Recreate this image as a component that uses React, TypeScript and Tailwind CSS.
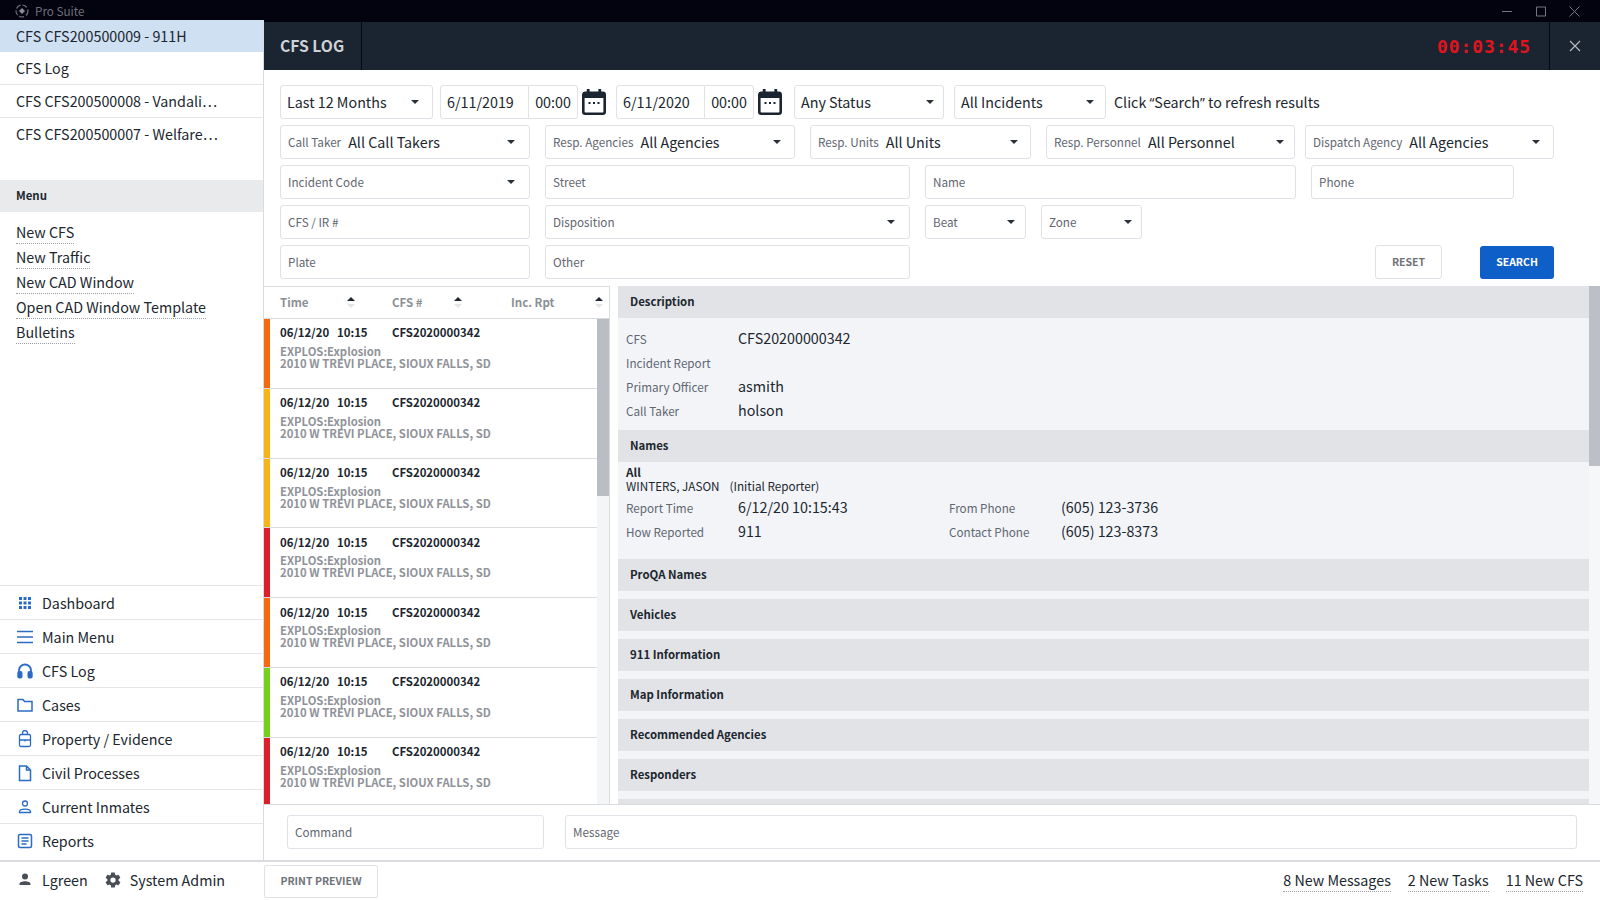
const font = { fontFamily: '"Noto Sans CJK SC", "Noto Sans", sans-serif' };

const colors = ["bg-[#f46a12]", "bg-[#f6b417]", "bg-[#f6b417]", "bg-[#dc1f2b]", "bg-[#f46a12]", "bg-[#74d01c]", "bg-[#dc1f2b]"];
const sections = ["ProQA Names", "Vehicles", "911 Information", "Map Information", "Recommended Agencies", "Responders"];

const Caret = () => (
	<svg width="8" height="4" viewBox="0 0 8 4" className="shrink-0">
		<path d="M0 0h8L4 4z" fill="#2a3038" />
	</svg>
);

const Sel = ({ label, value, className, caret }: { label?: string; value?: string; className: string; caret?: string }) => (
	<div className={`flex h-[34px] shrink-0 items-center rounded-[3px] border border-[#dfe2e6] bg-white pr-[14px] ${label ? "pl-[7px]" : "pl-[6px]"} ${className}`}>
		{label && <span className={`whitespace-nowrap text-[11.7px] text-[#5f6670] ${value ? "mr-[7px]" : ""}`}>{label}</span>}
		{value && <span className="whitespace-nowrap text-[14.3px] text-[#20262e]">{value}</span>}
		<span className={`ml-auto ${caret ?? ""}`}>
			<Caret />
		</span>
	</div>
);

const Field = ({ label, className }: { label: string; className: string }) => (
	<div className={`flex h-[34px] shrink-0 items-center rounded-[3px] border border-[#dfe2e6] bg-white px-[7px] text-[11.7px] text-[#5f6670] ${className}`}>{label}</div>
);

const DateTime = ({ date, className }: { date: string; className?: string }) => (
	<div className={`flex shrink-0 items-center ${className ?? ""}`}>
		<div className="flex h-[34px] w-[89px] items-center rounded-l-[3px] border border-[#dfe2e6] pl-[6px] text-[14.3px] text-[#20262e]">{date}</div>
		<div className="flex h-[34px] w-[49px] items-center justify-center rounded-r-[3px] border border-l-0 border-[#dfe2e6] text-[14.3px] text-[#20262e]">00:00</div>
		<svg width="24" height="26" viewBox="0 0 24 26" className="ml-[4px] shrink-0">
			<rect x="1.3" y="3.800" width="21.400" height="20.900" rx="2" fill="none" stroke="#1b2531" strokeWidth="2.600" />
			<rect x="1" y="3" width="22" height="6" fill="#1b2531" />
			<rect x="4.800" y="0" width="2.800" height="5" fill="#1b2531" />
			<rect x="16.400" y="0" width="2.800" height="5" fill="#1b2531" />
			<rect x="6.500" y="13" width="2" height="2" fill="#1b2531" />
			<rect x="11" y="13" width="2" height="2" fill="#1b2531" />
			<rect x="15.500" y="13" width="2" height="2" fill="#1b2531" />
		</svg>
	</div>
);

const Sort = () => (
	<svg width="8" height="11" viewBox="0 0 8 11" className="shrink-0">
		<path d="M0 4l4-4 4 4z" fill="#20262e" />
		<path d="M0 7l4 4 4-4z" fill="#e3e5e8" />
	</svg>
);

const iconProps = { fill: "none", stroke: "#2a6cc4", strokeWidth: 1.5, width: 18, height: 18, viewBox: "0 0 18 18" };

const navItems = [
	{
		label: "Dashboard",
		icon: (
			<svg width="18" height="18" viewBox="0 0 18 18" fill="#2a6cc4">
				{[3, 7.5, 12].flatMap((x) => [3, 7.5, 12].map((y) => <rect key={`${x}-${y}`} x={x} y={y} width="3" height="3" />))}
			</svg>
		),
	},
	{
		label: "Main Menu",
		icon: (
			<svg {...iconProps}>
				<path d="M1 3.500h16M1 9h16M1 14.500h16" />
			</svg>
		),
	},
	{
		label: "CFS Log",
		icon: (
			<svg {...iconProps} strokeWidth={1.8}>
				<path d="M3 11V8.500a6 6 0 0 1 12 0V11" />
				<rect x="2.200" y="10" width="3.400" height="5.500" rx="1" fill="#2a6cc4" />
				<rect x="12.400" y="10" width="3.400" height="5.500" rx="1" fill="#2a6cc4" />
			</svg>
		),
	},
	{
		label: "Cases",
		icon: (
			<svg {...iconProps}>
				<path d="M2 3.500h5l1.500 2h7.500v9.500h-14z" />
			</svg>
		),
	},
	{
		label: "Property / Evidence",
		icon: (
			<svg {...iconProps} strokeWidth={1.3}>
				<rect x="3.500" y="4.500" width="11" height="12" rx="1.500" />
				<path d="M6.500 4.500V3a2.500 2.500 0 0 1 5 0v1.500M3.500 10h11M9 9.500v2" />
			</svg>
		),
	},
	{
		label: "Civil Processes",
		icon: (
			<svg {...iconProps}>
				<path d="M3.500 2h7l4 4v10.500h-11zM10.500 2v4h4" />
			</svg>
		),
	},
	{
		label: "Current Inmates",
		icon: (
			<svg {...iconProps} strokeWidth={1.3}>
				<circle cx="9" cy="5.500" r="2.500" />
				<path d="M3.500 14.500v-1c0-1.500 2.500-2.300 5.500-2.300s5.500.8 5.500 2.300v1z" />
			</svg>
		),
	},
	{
		label: "Reports",
		icon: (
			<svg {...iconProps}>
				<rect x="2.500" y="2.500" width="13" height="13" rx="1.500" />
				<path d="M5.500 6h7M5.500 9h7M5.500 12h5" />
			</svg>
		),
	},
];

const Section = ({ title }: { title: string }) => (
	<div className="flex h-[32px] shrink-0 items-center bg-[#e1e3e7] px-[12px] text-[11.4px] font-semibold text-[#20262e]">{title}</div>
);

const Info = ({ label, value }: { label: string; value?: string }) => (
	<div className="flex h-[24px] items-center">
		<span className="w-[112px] text-[11.7px] text-[#5f6670]">{label}</span>
		<span className="pb-[2px] text-[14.3px] text-[#20262e]">{value}</span>
	</div>
);

const NewCount = ({ text }: { text: string }) => (
	<span className="border-b border-dotted border-[#9aa0a8] pb-[3px] text-[14.3px] leading-[17px] text-[#20262e]">{text}</span>
);

export default function App() {
	return (
		<div className="flex h-[900px] w-[1600px] flex-col overflow-hidden bg-white" style={font}>
			<div className="flex h-[22px] shrink-0 items-center bg-[#02030f] pl-[15px]">
				<svg width="14" height="14" viewBox="0 0 14 14" fill="none" className="mr-[6px]">
					<circle cx="7" cy="7" r="6" stroke="#6d7079" strokeWidth="1.200" strokeDasharray="5 2" />
					<path d="M7 4l3 3-3 3-3-3z" fill="#8a8d95" />
				</svg>
				<span className="text-[11.700px] leading-none text-[#6d7079]">Pro Suite</span>
				<svg width="100" height="22" viewBox="0 0 100 22" fill="none" stroke="#73777f" strokeWidth="1" className="ml-auto">
					<path d="M2 11.500h10M36.500 7h9v9h-9zM69.500 6.500l10 10M79.500 6.500l-10 10" />
				</svg>
			</div>

			<div className="flex min-h-0 flex-1">
				<aside className="-mt-[2px] flex w-[264px] shrink-0 flex-col border-r border-[#d9dbdf] bg-white text-[14.3px] text-[#20262e]">
					<div className="flex h-[32px] items-center bg-[#cfe0f3] pl-[16px]">CFS CFS200500009 - 911H</div>
					<div className="flex h-[33px] items-center border-b border-[#e3e5e8] pl-[16px]">CFS Log</div>
					<div className="flex h-[33px] items-center border-b border-[#e3e5e8] pl-[16px]">CFS CFS200500008 - Vandali…</div>
					<div className="flex h-[33px] items-center pb-[2px] pl-[16px]">CFS CFS200500007 - Welfare…</div>
					<div className="mt-[29px] flex h-[32px] items-center bg-[#e9eaec] pl-[16px] text-[11.400px] font-semibold">Menu</div>
					<div className="mt-[11px] flex flex-col items-start gap-[4px] pl-[16px] leading-[18px]">
						{["New CFS", "New Traffic", "New CAD Window", "Open CAD Window Template", "Bulletins"].map((m) => (
							<span key={m} className="border-b border-dotted border-[#9aa0a8] pb-[2px]">
								{m}
							</span>
						))}
					</div>
					<div className="mb-[3px] mt-auto flex flex-col">
						{navItems.map((n) => (
							<div key={n.label} className="flex h-[34px] items-center border-t border-[#e3e5e8] pl-[16px]">
								<span className="mr-[8px] flex w-[18px] justify-center">{n.icon}</span>
								{n.label}
							</div>
						))}
					</div>
				</aside>

				<main className="flex min-w-0 flex-1 flex-col">
					<div className="flex h-[48px] shrink-0 items-stretch bg-[#1a2531]">
						<div className="flex w-[98px] items-center border-r border-[#05080e] pl-[16px] text-[15.700px] font-semibold text-[#cfd3d8]">CFS LOG</div>
						<div className="ml-auto flex items-center pr-[18px] text-[18px] font-bold tracking-[0.9px] text-[#e0141f]" style={{ fontFamily: '"DejaVu Sans Mono", monospace' }}>
							00:03:45
						</div>
						<div className="flex w-[51px] items-center justify-center border-l border-[#05080e]">
							<svg width="12" height="12" viewBox="0 0 12 12" stroke="#b6bac0" strokeWidth="1.200">
								<path d="M1 1l10 10M11 1L1 11" />
							</svg>
						</div>
					</div>

					<div className="flex shrink-0 flex-col gap-[6px] pl-[16px] pr-[46px] pt-[15px]">
						<div className="flex h-[34px] items-center">
							<Sel value="Last 12 Months" className="mr-[7px] w-[153px]" caret="mr-[-1px]" />
							<DateTime date="6/11/2019" className="mr-[10px]" />
							<DateTime date="6/11/2020" className="mr-[12px]" />
							<Sel value="Any Status" className="mr-[10px] w-[150px]" caret="mr-[-5px]" />
							<Sel value="All Incidents" className="mr-[8px] w-[152px]" caret="mr-[-3px]" />
							<span className="text-[14.3px] text-[#20262e]">
								Click <span className="font-['Noto_Sans'] text-[13.5px]">“</span>Search<span className="font-['Noto_Sans'] text-[13.5px]">”</span> to refresh results
							</span>
						</div>
						<div className="flex items-center">
							<Sel label="Call Taker" value="All Call Takers" className="mr-[15px] w-[250px]" />
							<Sel label="Resp. Agencies" value="All Agencies" className="mr-[15px] w-[250px]" caret="mr-[-1px]" />
							<Sel label="Resp. Units" value="All Units" className="mr-[15px] w-[221px]" caret="mr-[-2px]" />
							<Sel label="Resp. Personnel" value="All Personnel" className="mr-[10px] w-[249px]" caret="mr-[-4px]" />
							<Sel label="Dispatch Agency" value="All Agencies" className="w-[249px]" caret="mr-[-1px]" />
						</div>
						<div className="flex items-center">
							<Sel label="Incident Code" className="mr-[15px] w-[250px]" />
							<Field label="Street" className="mr-[15px] w-[365px]" />
							<Field label="Name" className="mr-[15px] w-[371px]" />
							<Field label="Phone" className="w-[203px]" />
						</div>
						<div className="flex items-center">
							<Field label="CFS / IR #" className="mr-[15px] w-[250px]" />
							<Sel label="Disposition" className="mr-[15px] w-[365px]" />
							<Sel label="Beat" className="mr-[15px] w-[101px]" caret="mr-[-4px]" />
							<Sel label="Zone" className="w-[101px]" caret="mr-[-5px]" />
						</div>
						<div className="flex items-center">
							<Field label="Plate" className="mr-[15px] w-[250px]" />
							<Field label="Other" className="w-[365px]" />
							<div className="ml-auto mr-[38px] flex h-[34px] w-[67px] items-center justify-center rounded-[3px] border border-[#dfe2e6] text-[10.500px] font-semibold text-[#6f7379]">RESET</div>
							<div className="flex h-[33px] w-[74px] items-center justify-center rounded-[3px] bg-[#0f5fc8] text-[10.500px] font-semibold text-white">SEARCH</div>
						</div>
					</div>

					<div className="mt-[7px] flex min-h-0 flex-1">
						<div className="flex w-[346px] shrink-0 flex-col border-t border-r border-[#d9dbdf]">
							<div className="flex h-[32px] shrink-0 items-center border-b border-[#d9dbdf] pl-[16px] text-[11.500px] font-semibold text-[#8a8f96]">
								<span className="w-[67px]">Time</span>
								<span className="w-[45px]">
									<Sort />
								</span>
								<span className="w-[62px]">CFS #</span>
								<span className="w-[57px]">
									<Sort />
								</span>
								<span className="w-[84px]">Inc. Rpt</span>
								<Sort />
							</div>
							<div className="flex min-h-0 flex-1 overflow-hidden">
								<div className="min-w-0 flex-1">
									{colors.map((c, i) => (
										<div key={i} className="flex h-[69.800px] border-b border-[#d9dbdf]">
											<span className={`w-[6px] shrink-0 ${c}`} />
											<div className="pl-[10px] pt-[4px]">
												<div className="flex h-[20px] items-center text-[11.400px] font-semibold text-[#20262e]">
													<span className="w-[57px]">06/12/20</span>
													<span className="w-[55px]">10:15</span>
													<span>CFS2020000342</span>
												</div>
												<div className="mt-[2px] text-[11.300px] font-semibold leading-[12px] text-[#8f9399]">EXPLOS:Explosion</div>
												<div className="text-[11.300px] font-semibold leading-[12px] text-[#8f9399]">2010 W TREVI PLACE, SIOUX FALLS, SD</div>
											</div>
										</div>
									))}
								</div>
								<div className="w-[12px] shrink-0 bg-[#f4f5f7]">
									<div className="h-[177px] bg-[#b9bdc4]" />
								</div>
							</div>
						</div>

						<div className="flex min-w-0 flex-1 overflow-hidden pl-[8px]">
							<div className="min-w-0 flex-1 overflow-hidden bg-[#f2f4f8]">
								<Section title="Description" />
								<div className="h-[112px] px-[8px] pt-[9px]">
									<Info label="CFS" value="CFS20200000342" />
									<Info label="Incident Report" />
									<Info label="Primary Officer" value="asmith" />
									<Info label="Call Taker" value="holson" />
								</div>
								<Section title="Names" />
								<div className="h-[97px] px-[8px] pt-[3px]">
									<div className="text-[11.700px] font-semibold leading-[13px] text-[#20262e]">All</div>
									<div className="mb-[2px] text-[11.700px] leading-[16px] text-[#20262e]">
										WINTERS, JASON<span className="ml-[10px]">(Initial Reporter)</span>
									</div>
									<div className="flex">
										<div className="w-[323px]">
											<Info label="Report Time" value="6/12/20 10:15:43" />
											<Info label="How Reported" value="911" />
										</div>
										<div>
											<Info label="From Phone" value="(605) 123-3736" />
											<Info label="Contact Phone" value="(605) 123-8373" />
										</div>
									</div>
								</div>
								<div className="flex flex-col gap-[8px]">
									{sections.map((s) => (
										<Section key={s} title={s} />
									))}
									<Section title="" />
								</div>
							</div>
							<div className="w-[11px] shrink-0 bg-[#f6f7f9]">
								<div className="h-[180px] bg-[#bcbfc6]" />
							</div>
						</div>
					</div>

					<div className="flex h-[56px] shrink-0 items-center gap-[21px] border-t border-[#d9dbdf] pb-[2px] pl-[23px] pr-[23px]">
						<Field label="Command" className="w-[257px]" />
						<Field label="Message" className="flex-1" />
					</div>
				</main>
			</div>

			<div className="flex h-[40px] shrink-0 items-center border-t-2 border-[#d9dbdf] bg-white">
				<div className="flex w-[264px] shrink-0 items-center pb-[2px] pl-[16px] text-[14.3px] text-[#20262e]">
					<svg width="18" height="18" viewBox="0 0 18 18" fill="#4a4f57" className="mr-[8px]">
						<circle cx="9" cy="5.500" r="3" />
						<path d="M3.500 14v-1c0-1.800 2.800-2.800 5.500-2.800s5.500 1 5.500 2.800v1z" />
					</svg>
					<span>Lgreen</span>
					<svg width="18" height="18" viewBox="0 0 24 24" fill="#4a4f57" className="ml-[16px] mr-[8px]">
						<path d="M19.400 13c.04-.33.06-.66.06-1s-.02-.67-.06-1l2.110-1.650a.5.5 0 0 0 .12-.64l-2-3.460a.5.5 0 0 0-.61-.22l-2.490 1a7.300 7.300 0 0 0-1.730-1l-.38-2.650A.49.49 0 0 0 14 2h-4a.49.49 0 0 0-.49.420l-.38 2.650a7.700 7.700 0 0 0-1.730 1l-2.490-1a.49.49 0 0 0-.61.220l-2 3.460a.49.49 0 0 0 .12.640L4.530 11a7.900 7.900 0 0 0 0 2l-2.110 1.650a.5.5 0 0 0-.12.640l2 3.460c.12.220.39.300.61.220l2.490-1c.52.400 1.080.730 1.730 1l.38 2.650c.03.240.24.420.49.420h4c.25 0 .46-.18.490-.42l.38-2.650a7.700 7.700 0 0 0 1.730-1l2.490 1c.22.080.49 0 .61-.22l2-3.460a.5.5 0 0 0-.12-.64zM12 15.500a3.500 3.500 0 1 1 0-7 3.500 3.500 0 0 1 0 7z" />
					</svg>
					<span>System Admin</span>
				</div>
				<div className="flex h-[33px] w-[114px] items-center justify-center rounded-[2px] border border-[#dfe2e6] text-[10.500px] font-semibold text-[#6f7379]">PRINT PREVIEW</div>
				<div className="ml-auto flex items-center gap-[17px] pr-[17px]">
					<NewCount text="8 New Messages" />
					<NewCount text="2 New Tasks" />
					<NewCount text="11 New CFS" />
				</div>
			</div>
		</div>
	);
}
